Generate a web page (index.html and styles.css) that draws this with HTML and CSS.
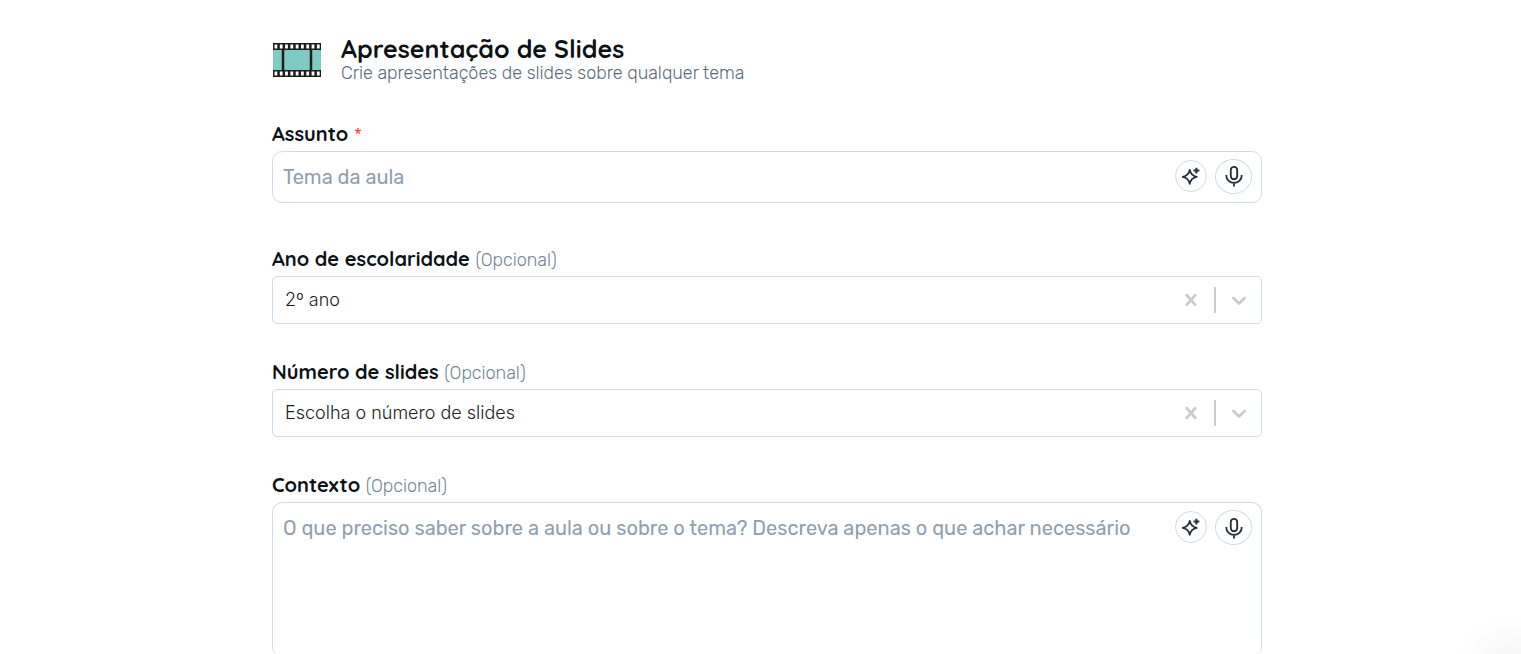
FILE: index.html
```html
<!DOCTYPE html>
<html lang="pt">
<head>
    <meta charset="UTF-8">
    <meta name="viewport" content="width=device-width, initial-scale=1.0">
    <title>Apresentação de Slides</title>
    <link rel="stylesheet" href="styles.css">
</head>
<body>
    <!-- Shared icons -->
    <svg class="icon-defs" aria-hidden="true">
        <symbol id="icon-sparkle" viewBox="0 0 24 24">
            <path d="M10.5 4.5 C11.4 9.6 13.4 12 19 13 C13.4 14 11.4 16.4 10.5 21.5 C9.6 16.4 7.600 14 2 13 C7.600 12 9.6 9.6 10.5 4.500Z" fill="none" stroke="currentColor" stroke-width="2" stroke-linejoin="round"/>
            <path d="M18.500 2v7M15 5.500h7" stroke="currentColor" stroke-width="2.400"/>
        </symbol>
        <symbol id="icon-mic" viewBox="0 0 24 24">
            <rect x="8.500" y="2" width="7" height="13.500" rx="3.500" fill="none" stroke="currentColor" stroke-width="2"/>
            <path d="M3.700 11v1.200a8.300 7.300 0 0 0 16.600 0V11M12 19.500V23.500" fill="none" stroke="currentColor" stroke-width="2"/>
        </symbol>
        <symbol id="icon-clear" viewBox="0 0 20 20">
            <path d="M14.348 14.849c-0.469 0.469-1.229 0.469-1.697 0l-2.651-3.030-2.651 3.029c-0.469 0.469-1.229 0.469-1.697 0-0.469-0.469-0.469-1.229 0-1.697l2.758-3.150-2.759-3.152c-0.469-0.469-0.469-1.228 0-1.697s1.228-0.469 1.697 0l2.652 3.031 2.651-3.031c0.469-0.469 1.228-0.469 1.697 0s0.469 1.229 0 1.697l-2.758 3.152 2.758 3.150c0.469 0.469 0.469 1.229 0 1.698z" fill="currentColor"/>
        </symbol>
        <symbol id="icon-down" viewBox="0 0 20 20">
            <path d="M4.516 7.548c0.436-0.446 1.043-0.481 1.576 0l3.908 3.747 3.908-3.747c0.533-0.481 1.141-0.446 1.574 0 0.436 0.445 0.408 1.197 0 1.615-0.406 0.418-4.695 4.502-4.695 4.502-0.217 0.223-0.502 0.335-0.787 0.335s-0.570-0.112-0.789-0.335c0 0-4.287-4.084-4.695-4.502s-0.436-1.170 0-1.615z" fill="currentColor"/>
        </symbol>
    </svg>

    <main class="page">
        <header class="tool-header">
            <svg class="tool-icon" viewBox="0 0 48 48" aria-hidden="true">
                <rect y="13" width="48" height="22" fill="#7fcac3"/>
                <rect y="7" width="48" height="7" fill="#1d1d1b"/>
                <rect y="34" width="48" height="7" fill="#1d1d1b"/>
                <path d="M1.500 10.500h46M1.500 37.500h46" stroke="#fff" stroke-width="4" stroke-dasharray="2.800 2.500"/>
                <path d="M10 13v22M38 13v22" stroke="#1d1d1b" stroke-width="2.500"/>
            </svg>
            <div class="tool-text">
                <h1>Apresentação de Slides</h1>
                <p>Crie apresentações de slides sobre qualquer tema</p>
            </div>
        </header>

        <form class="tool-form">
            <div class="field field-subject">
                <label for="subject">Assunto <span class="required">*</span></label>
                <div class="text-box">
                    <input type="text" id="subject" placeholder="Tema da aula" required>
                    <button type="button" class="round-btn" aria-label="Sugerir"><svg><use href="#icon-sparkle"/></svg></button>
                    <button type="button" class="round-btn mic-btn" aria-label="Ditar"><svg><use href="#icon-mic"/></svg></button>
                </div>
            </div>

            <div class="field">
                <label for="grade">Ano de escolaridade <span class="optional">(Opcional)</span></label>
                <div class="select-box">
                    <select id="grade">
                        <option>2º ano</option>
                    </select>
                    <button type="button" class="clear-btn" aria-label="Limpar"><svg><use href="#icon-clear"/></svg></button>
                    <span class="divider"></span>
                    <svg class="arrow" aria-hidden="true"><use href="#icon-down"/></svg>
                </div>
            </div>

            <div class="field">
                <label for="slides">Número de slides <span class="optional">(Opcional)</span></label>
                <div class="select-box">
                    <select id="slides">
                        <option>Escolha o número de slides</option>
                    </select>
                    <button type="button" class="clear-btn" aria-label="Limpar"><svg><use href="#icon-clear"/></svg></button>
                    <span class="divider"></span>
                    <svg class="arrow" aria-hidden="true"><use href="#icon-down"/></svg>
                </div>
            </div>

            <div class="field">
                <label for="context">Contexto <span class="optional">(Opcional)</span></label>
                <div class="text-box area-box">
                    <textarea id="context" placeholder="O que preciso saber sobre a aula ou sobre o tema? Descreva apenas o que achar necessário"></textarea>
                    <button type="button" class="round-btn" aria-label="Sugerir"><svg><use href="#icon-sparkle"/></svg></button>
                    <button type="button" class="round-btn mic-btn" aria-label="Ditar"><svg><use href="#icon-mic"/></svg></button>
                </div>
            </div>
        </form>
    </main>

    <div class="chat-shadow"></div>
</body>
</html>
```
FILE: styles.css
```css
* {
    box-sizing: border-box;
}
body {
    display: flex;
    flex-direction: column;
    margin: 0;
    padding-left: 13px;
    height: 100vh;
    overflow: hidden;
    background-color: #fff;
    color: #0d1216;
    font-family: Rubik, Roboto, sans-serif;
}
h1, p {
    margin: 0;
}
.icon-defs {
    position: absolute;
    width: 0;
    height: 0;
}
.page {
    display: flex;
    flex-direction: column;
    flex: 1;
    width: 100%;
    max-width: 990px;
    min-height: 0;
    margin: 0 auto;
    padding-top: 35px;
}
.tool-header {
    display: flex;
    align-items: center;
    gap: 20px;
    margin-bottom: 38px;
    padding-left: 1px;
}
.tool-icon {
    width: 48px;
    height: 48px;
}
.tool-text h1 {
    font-family: Quicksand, Inter, sans-serif;
    font-size: 25px;
    font-weight: 700;
    line-height: 28px;
}
.tool-text p {
    font-size: 18px;
    font-weight: 350;
    line-height: 21px;
    color: #5b6b79;
}
.tool-form {
    display: flex;
    flex-direction: column;
    flex: 1;
    min-height: 0;
}
.field {
    margin-bottom: 36px;
}
.field-subject {
    margin-bottom: 44px;
}
.field label {
    display: block;
    margin-bottom: 5px;
    font-family: Quicksand, Inter, sans-serif;
    font-size: 20px;
    font-weight: 700;
    line-height: 24px;
}
.required,
.optional {
    font-family: Rubik, Roboto, sans-serif;
    font-size: 18px;
    font-weight: 350;
    line-height: 18px;
}
.required {
    color: #f04438;
}
.optional {
    color: #748593;
}
.text-box {
    display: flex;
    align-items: center;
    height: 52px;
    padding: 0 9px 0 10px;
    border: 1px solid #d3dbe4;
    border-radius: 10px;
}
.text-box input,
.text-box textarea {
    flex: 1;
    min-width: 0;
    padding: 0;
    border: none;
    outline: none;
    background: none;
    color: #0d1216;
    font-family: Rubik, Roboto, sans-serif;
    font-size: 20px;
    line-height: 24px;
    resize: none;
}
.text-box ::placeholder {
    color: #91a0ad;
    opacity: 1;
}
/* the context field takes the rest of the window */
.field:last-child {
    display: flex;
    flex-direction: column;
    flex: 1;
    min-height: 0;
    margin-bottom: 0;
}
.area-box {
    flex: 1;
    align-items: flex-start;
    height: auto;
    padding-top: 7px;
    border-bottom: none;
    border-bottom-left-radius: 6px;
    border-bottom-right-radius: 6px;
}
.text-box textarea {
    height: 100%;
    padding-top: 6px;
}
.round-btn {
    display: flex;
    align-items: center;
    justify-content: center;
    width: 32px;
    height: 32px;
    margin-bottom: 2px;
    padding: 0;
    border: 1px solid #d3dbe4;
    border-radius: 50%;
    background-color: #fff;
    color: #27303a;
    cursor: pointer;
}
.area-box .round-btn {
    margin-top: 1px;
}
.round-btn svg {
    width: 20px;
    height: 20px;
}
.text-box .mic-btn {
    width: 37px;
    height: 35px;
    margin-top: 0;
    margin-left: 8px;
}
.mic-btn svg {
    width: 22px;
    height: 22px;
}
.select-box {
    display: flex;
    align-items: center;
    height: 48px;
    padding: 0 10px 0 12px;
    border: 1px solid #d3dbe4;
    border-radius: 5px;
}
.select-box select {
    flex: 1;
    min-width: 0;
    height: 100%;
    padding: 0 0 2px;
    border: none;
    outline: none;
    appearance: none;
    background: none;
    color: #222;
    font-family: Inter, sans-serif;
    font-size: 18px;
    font-weight: 300;
}
.clear-btn {
    display: flex;
    padding: 0;
    border: none;
    background: none;
    color: #ccc;
    cursor: pointer;
}
.clear-btn svg,
.arrow {
    width: 24px;
    height: 24px;
    color: #ccc;
}
.divider {
    width: 2px;
    height: 26px;
    margin: 0 11px;
    background-color: #ccc;
}
/* glow of the chat bubble in the corner */
.chat-shadow {
    position: fixed;
    right: -20px;
    bottom: -40px;
    width: 50px;
    height: 40px;
    border-radius: 20px;
    box-shadow: 0 0 50px rgba(0, 0, 0, 0.12);
}
```
